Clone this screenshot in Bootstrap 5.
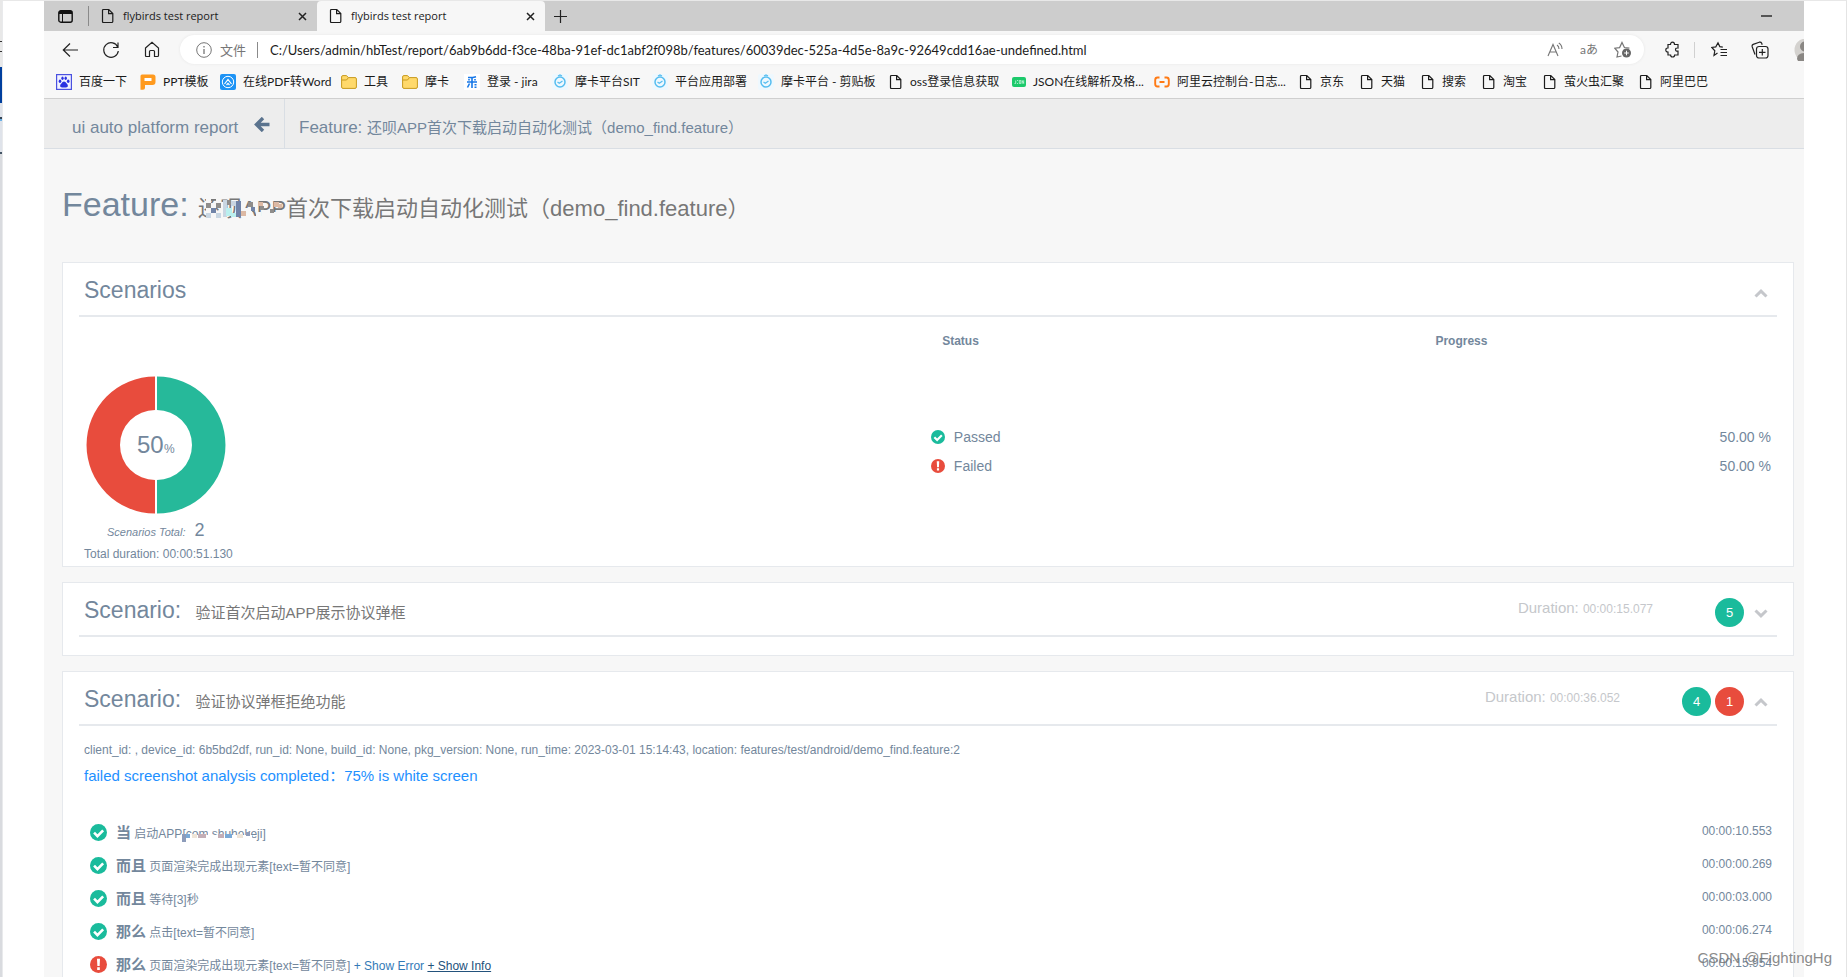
<!DOCTYPE html>
<html lang="zh-CN">
<head>
<meta charset="utf-8">
<meta name="viewport" content="width=device-width, initial-scale=1">
<title>flybirds test report</title>
<link href="https://cdn.jsdelivr.net/npm/bootstrap@5.3.0/dist/css/bootstrap.min.css" rel="stylesheet">
<style>
  :root { --ink:#73879c; --rule:#e6e9ed; --green:#1abb9c; --red:#e84c3d; --muted:#c5c7cb; }
  body { font-family:"Liberation Sans","Noto Sans CJK SC",sans-serif; font-size:12px; line-height:20px; color:var(--ink); background:#fff; }
  svg { flex:none; display:block; }
  button { border:0; background:none; padding:0; color:inherit; }
  .desk { height:100vh; overflow:hidden; border-top:1px solid #e8e8e8; border-right:1px solid #e4e4e4; }
  .edge { width:3px; flex:none; border-right:1px solid #e9eaec;
    background:linear-gradient(#e8e8e8 0 40px,#333 40px 41px,#e8e8e8 41px 50px,#333 50px 51px,#e8e8e8 51px 66px,#003f9e 66px 102px,#dfe3ea 102px 116px,#345 116px 118px,#6ab0e6 118px 120px,#dfe3ea 120px 151px,#456 151px 153px,#d9dbdf 153px); }
  .browser { margin-left:41px; margin-right:42px; background:#f7f7f7; min-width:0; overflow:hidden; }
  .chrome-ui { font-family:Lato,"Noto Sans CJK SC",sans-serif; color:#1b1b1b; }
  .tabstrip { height:30px; background:#cdcdcd; font-family:"Open Sans","Noto Sans CJK SC",sans-serif; font-size:11px; }
  .tab-menu { margin:0 15px 0 14px; }
  .tab-item { height:30px; width:228px; padding:0 10px 0 12px; }
  .tab-item.current { background:#f7f7f7; border-radius:4px 4px 0 0; }
  .vline { width:1px; height:16px; background:#8a8a8a; flex:none; }
  .vline.tall { height:20px; }
  .vline.pale { background:#d0d0d0; margin:0 16px 0 13px; }
  .toolbar { height:37px; padding-left:18px; }
  .address { height:29px; background:#fff; border-radius:15px; padding:0 12px 0 16px; margin:0 21px 0 20px; color:#767676; font-size:13px; box-shadow:0 0 3px #e6e6e6; }
  .address label { margin:0 11px 0 8px; }
  .address input { border:0; outline:0; background:none; color:#1b1b1b; padding:0; min-width:0; }
  .address button { font-size:12px; }
  .marks { height:31px; display:grid; grid-template-columns:84fr 80fr 121fr 61fr 62fr 88fr 100fr 106fr 131fr 123fr 142fr 145fr 61fr 61fr 61fr 61fr 96fr 83fr; padding:0 82px 3px 12px; border-bottom:1px solid #cfcfcf; }
  .marks a { color:#1b1b1b; font-size:12px; white-space:nowrap; gap:7px; }
  .avatar-box { width:11px; overflow:hidden; }
  .report-nav { height:50px; background:#ededed; border-bottom:1px solid #d9dee4; font-size:17px; line-height:48px; }
  .report-nav a { color:var(--ink); padding:5px 0 0 14px; height:49px; }
  .report-nav .brand { width:241px; padding-left:28px; border-right:1px solid #d9dee4; }
  .brand svg { margin:13px 0 0 16px; }
  .fs15 { font-size:15px; }
  .page-head { font-size:34px; line-height:48px; padding:31px 0 34px 18px; margin:0; font-weight:400; }
  .page-head small { font-size:22px; line-height:1; color:#777; }
  .panel-list { padding:0 10px 0 18px; }
  .panel { background:#fff; border:1px solid var(--rule); padding:0 16px 2px; margin-bottom:15px; }
  .panel.folded { padding-bottom:18px; }
  .panel-top { height:54px; border-bottom:2px solid var(--rule); padding:6px 9px 0 5px; }
  .panel-top h2 { font-size:23px; line-height:28px; margin:0; font-weight:400; padding-bottom:4px; }
  .panel-top h2 small { font-size:15px; line-height:1; color:#777; margin-left:8px; }
  .took { color:var(--muted); font-size:15px; margin-right:62px; padding-bottom:7px; }
  .took small { font-size:12px; }
  .count { width:29px; height:29px; line-height:29px; border-radius:50%; color:#fff; text-align:center; font-size:13px; margin-right:4px; }
  .bg-ok { background:var(--green); } .bg-bad { background:var(--red); }
  .fold { margin-left:6px; color:var(--muted); }
  .fold svg { margin-top:2px; }
  .summary { width:41%; padding-left:5px; }
  .summary svg { margin:59px 0 4px 2px; }
  .total { line-height:24px; padding-left:23px; font-size:18px; }
  .total em { font-size:11px; margin-right:4px; }
  .stats { width:59%; margin-top:14px; font-size:14px; align-self:flex-start; }
  .stats th { font-size:12px; line-height:20px; text-align:center; padding:0; }
  .stats td { height:29px; padding:0; }
  .stats tr:first-child td { padding-top:71px; height:100px; }
  .stats td:last-child { text-align:right; padding-right:6px; }
  .state { margin-left:42%; gap:9px; }
  .meta { padding:14px 5px 0; }
  .verdict { color:#1e90ff; font-size:15px; line-height:24px; padding:4px 5px 28px; }
  .steps { padding:0 5px 0 11px; }
  .steps li { height:33px; }
  .steps .words { line-height:34px; margin-left:9px; }
  .steps b { font-size:15px; }
  .steps time { line-height:30px; }
  .steps a { color:#337ab7; }
  .steps a.hot { color:#23527c; text-decoration:underline; }
  .masked { position:relative; display:inline-block; }
  .masked svg { position:absolute; left:0; top:0; }
  .stamp { position:absolute; right:14px; bottom:9px; font-size:15px; line-height:20px; color:#777; opacity:.85; }
</style>
</head>
<body>
<svg width="0" height="0" class="position-absolute" aria-hidden="true">
  <defs>
    <symbol id="doc" viewBox="0 0 14 16"><path d="M2.5 1.5h5.3l4 4v8q0 1-1 1H2.500q-1 0-1-1v-11q0-1 1-1zM7.600 1.500v4.200h4.200" fill="none" stroke="currentColor" stroke-width="1.200"/></symbol>
    <symbol id="close" viewBox="0 0 9 9"><path d="M1 1l7 7M8 1L1 8" stroke="#222" stroke-width="1.500"/></symbol>
    <symbol id="folder" viewBox="0 0 16 16"><path d="M.6 3q0-1.400 1.300-1.400h3.600l1.800 2H14q1.400 0 1.400 1.300V13q0 1.400-1.400 1.400H2Q.6 14.400.6 13z" fill="#ffd96b" stroke="#c79a1e"/><path d="M.8 6h4.700l1.800-2.200" fill="none" stroke="#c79a1e"/></symbol>
    <symbol id="moka" viewBox="0 0 16 16"><rect width="16" height="16" rx="2" fill="#eef8fe"/><circle cx="8" cy="8" r="5" fill="none" stroke="#55bdf0" stroke-width="1.500"/><path d="M5.500 8l1.800 1.300L10.500 7M6 2l2-1 2 1" fill="none" stroke="#55bdf0" stroke-width="1.200"/></symbol>
    <symbol id="ok" viewBox="0 0 18 18"><circle cx="9" cy="9" r="9" fill="#1abb9c"/><path d="M4.300 9.200l3.600 3.600 6-6" fill="none" stroke="#fff" stroke-width="2.800"/></symbol>
    <symbol id="bad" viewBox="0 0 18 18"><circle cx="9" cy="9" r="9" fill="#e84c3d"/><path d="M7.400 3h3.200l-.4 7.500H7.800zM7.600 12h2.800v2.700H7.600z" fill="#fff"/></symbol>
    <symbol id="up" viewBox="0 0 14 9"><path d="M1.500 7.500L7 2.200l5.500 5.300" fill="none" stroke="currentColor" stroke-width="3"/></symbol>
    <symbol id="down" viewBox="0 0 14 9"><path d="M1.500 1.500L7 6.800l5.500-5.300" fill="none" stroke="currentColor" stroke-width="3"/></symbol>
  </defs>
</svg>
<div class="desk d-flex position-relative">
  <div class="edge"></div>
  <div class="browser flex-grow-1">
    <header class="chrome-ui">
      <div class="tabstrip d-flex align-items-center">
        <button class="tab-menu" aria-label="Tab actions"><svg width="15" height="13" viewBox="0 0 15 13"><rect x=".8" y=".8" width="13.400" height="11.400" rx="2" fill="none" stroke="#111" stroke-width="1.400"/><path d="M1 1h13v3H1z" fill="#111"/><path d="M4.500 4v8" stroke="#111"/></svg></button>
        <span class="vline tall"></span>
        <div class="tab-item d-flex align-items-center"><svg width="14" height="16"><use href="#doc"/></svg><span class="ms-2 flex-grow-1">flybirds test report</span><button aria-label="Close tab"><svg width="9" height="9"><use href="#close"/></svg></button></div>
        <div class="tab-item current d-flex align-items-center"><svg width="14" height="16"><use href="#doc"/></svg><span class="ms-2 flex-grow-1">flybirds test report</span><button aria-label="Close tab"><svg width="9" height="9"><use href="#close"/></svg></button></div>
        <button class="ms-2" aria-label="New tab"><svg width="15" height="15" viewBox="0 0 15 15"><path d="M7.500 1v13M1 7.500h13" stroke="#222" stroke-width="1.200"/></svg></button>
        <button aria-label="Minimize" class="ms-auto me-4 pe-2"><svg width="11" height="2"><path d="M0 1h11" stroke="#222" stroke-width="1.400"/></svg></button>
      </div>
      <div class="toolbar d-flex align-items-center">
        <button aria-label="Back"><svg width="16" height="16" viewBox="0 0 16 16"><path d="M16 8H1.500M8 1.500L1.300 8 8 14.500" fill="none" stroke="#222" stroke-width="1.200"/></svg></button>
        <button aria-label="Refresh" class="ms-4"><svg width="18" height="18" viewBox="0 0 18 18"><path d="M15.800 6.200A7.300 7.300 0 1 0 16.300 10M16 1.500v5h-5" fill="none" stroke="#222" stroke-width="1.200"/></svg></button>
        <button aria-label="Home" class="ms-4"><svg width="16" height="17" viewBox="0 0 16 17"><path d="M1.500 7L8 1.200 14.500 7v7.500q0 1-1 1h-3v-5q0-1-1-1h-3q-1 0-1 1v5h-3q-1 0-1-1z" fill="none" stroke="#222" stroke-width="1.200"/></svg></button>
        <div class="address d-flex align-items-center flex-grow-1">
          <svg width="16" height="16" viewBox="0 0 16 16"><circle cx="8" cy="8" r="7.300" fill="none" stroke="#767676"/><path d="M8 7v5M8 4v1.500" stroke="#767676" stroke-width="1.300"/></svg>
          <label for="url" class="text-nowrap">文件</label><span class="vline me-2"></span>
          <input id="url" class="flex-grow-1 ms-1" value="C:/Users/admin/hbTest/report/6ab9b6dd-f3ce-48ba-91ef-dc1abf2f098b/features/60039dec-525a-4d5e-8a9c-92649cdd16ae-undefined.html">
          <button aria-label="Read aloud"><svg width="17" height="16" viewBox="0 0 17 16"><path d="M1 14L6 2.500 11 14M2.600 10h6.800M10 3q2 1.200 2 4M11.800 1q3.200 2 3.200 6" fill="none" stroke="#767676" stroke-width="1.100"/></svg></button>
          <button aria-label="Translate" class="ms-3 text-nowrap">aあ</button>
          <button aria-label="Add favorite" class="ms-3"><svg width="18" height="17" viewBox="0 0 18 17"><path d="M7.500 15L3 16l1-5L.8 7.200l4.800-.6L8 1.500l2.400 5 5 .7" fill="none" stroke="#767676" stroke-width="1.200"/><circle cx="12.500" cy="12" r="4.500" fill="#666"/><path d="M12.500 9.700v4.600M10.200 12h4.600" stroke="#fff"/></svg></button>
        </div>
        <button aria-label="Extensions"><svg width="16" height="17" viewBox="0 0 16 17"><path d="M3 3.500h2.500q0-2.300 2-2.300t2 2.300H13V7q-2.500-.2-2.500 1.600T13 10.200V14H9.600q0 2-2 2t-2-2H3v-3q-2.200 0-2.200-2T3 7z" fill="none" stroke="#222" stroke-width="1.200"/></svg></button>
        <span class="vline pale"></span>
        <button aria-label="Favorites"><svg width="16" height="17" viewBox="0 0 16 17"><path d="M6.500 12L3 14.500l.8-4.700L.8 6.500l4-.6L7 1.800l1.800 3.800 3 .5M9.500 8.500H16M9.500 11.500H16M9.500 14.500H16" fill="none" stroke="#222" stroke-width="1.200"/></svg></button>
        <button aria-label="Collections" class="ms-4"><svg width="18" height="18" viewBox="0 0 18 18"><rect x="5.500" y="5.500" width="11.500" height="11.500" rx="2.500" fill="none" stroke="#222" stroke-width="1.200"/><path d="M11.300 8v6.500M8 11.300h6.500M4 13.500L1.200 5.700q-.5-1.700 1-2.300l6-2.200q1.800-.5 2.500 1l.5 1.500" fill="none" stroke="#222" stroke-width="1.200"/></svg></button>
        <div class="avatar-box ms-4"><svg width="26" height="22" viewBox="0 0 26 22"><circle cx="13" cy="11" r="11.500" fill="#d4d2cf"/><circle cx="12" cy="7.500" r="5" fill="#8a8784"/><path d="M4 20q0-6 8-6t8 6v2H5z" fill="#8a8784"/></svg></div>
      </div>
      <nav class="marks" aria-label="Bookmarks">
        <a href="#" class="d-flex align-items-center text-decoration-none"><svg width="16" height="16" viewBox="0 0 16 16"><rect x=".6" y=".6" width="14.800" height="14.800" fill="#f2f3ff" stroke="#4a51e0" stroke-width="1.200"/><g fill="#2932e1"><ellipse cx="4" cy="7.300" rx="1.300" ry="1.800"/><ellipse cx="6.500" cy="4.300" rx="1.200" ry="1.800"/><ellipse cx="9.700" cy="4.300" rx="1.200" ry="1.800"/><ellipse cx="12.200" cy="7.300" rx="1.300" ry="1.800"/><path d="M8 7.500q1.500 0 2.500 1.800l1.200 1.500q.8 2.700-2 2.700H6.300q-2.800 0-2-2.700L5.600 9.300Q6.500 7.500 8 7.500z"/></g></svg>百度一下</a>
        <a href="#" class="d-flex align-items-center text-decoration-none"><svg width="16" height="16" viewBox="0 0 16 16"><path d="M2 .5h11q2.500 0 2.500 2.500v5q0 3-3 3H5v3q0 1.800-2 1.800H.5V2Q.5.500 2 .5z" fill="#ff9a1e"/><path d="M4.500 4h7v3h-7z" fill="#fff"/></svg>PPT模板</a>
        <a href="#" class="d-flex align-items-center text-decoration-none"><svg width="16" height="16" viewBox="0 0 16 16"><rect width="16" height="16" rx="2" fill="#1d93f5"/><circle cx="8" cy="8" r="5.700" fill="none" stroke="#fff"/><path d="M4.500 10L8 5.500l3.500 4.500M6.500 11L8 9.300 9.500 11" fill="none" stroke="#fff" stroke-width="1.200"/></svg>在线PDF转Word</a>
        <a href="#" class="d-flex align-items-center text-decoration-none"><svg width="16" height="16"><use href="#folder"/></svg>工具</a>
        <a href="#" class="d-flex align-items-center text-decoration-none"><svg width="16" height="16"><use href="#folder"/></svg>摩卡</a>
        <a href="#" class="d-flex align-items-center text-decoration-none"><svg width="16" height="16" viewBox="0 0 16 16"><rect width="16" height="16" fill="#fff"/><path d="M4 3.500q4 .3 8-.8M3 8h10M8 3.500V14M5 5v1.500M11 5v1.500M5.500 9.500l-2 4" stroke="#1677e8" stroke-width="1.600" fill="none"/><path d="M10.500 10h2v1.500h-2zM10.500 12.500h2V14h-2z" fill="#1677e8"/></svg>登录 - jira</a>
        <a href="#" class="d-flex align-items-center text-decoration-none"><svg width="16" height="16"><use href="#moka"/></svg>摩卡平台SIT</a>
        <a href="#" class="d-flex align-items-center text-decoration-none"><svg width="16" height="16"><use href="#moka"/></svg>平台应用部署</a>
        <a href="#" class="d-flex align-items-center text-decoration-none"><svg width="16" height="16"><use href="#moka"/></svg>摩卡平台 - 剪贴板</a>
        <a href="#" class="d-flex align-items-center text-decoration-none"><svg width="14" height="16"><use href="#doc"/></svg>oss登录信息获取</a>
        <a href="#" class="d-flex align-items-center text-decoration-none"><svg width="14" height="12" viewBox="0 0 14 12"><rect y="1" width="14" height="10" rx="2" fill="#1cc96b"/><path d="M2.500 7.500h1.200V4.500M5 7.500h1M5 4.500h1.200M7.300 4.500h1.500v3H7.300zM10.200 7.800V4.500l1.500 3V4.300" stroke="#c9f5dc" stroke-width=".8" fill="none"/></svg>JSON在线解析及格...</a>
        <a href="#" class="d-flex align-items-center text-decoration-none"><svg width="16" height="12" viewBox="0 0 16 12"><path d="M5.500 1.500h-2Q1.200 1.500 1.200 4v4q0 2.500 2.300 2.500h2M10.500 1.500h2q2.300 0 2.300 2.500v4q0 2.500-2.300 2.500h-2M5.500 6h5" fill="none" stroke="#ff7a14" stroke-width="1.900"/></svg>阿里云控制台-日志...</a>
        <a href="#" class="d-flex align-items-center text-decoration-none"><svg width="14" height="16"><use href="#doc"/></svg>京东</a>
        <a href="#" class="d-flex align-items-center text-decoration-none"><svg width="14" height="16"><use href="#doc"/></svg>天猫</a>
        <a href="#" class="d-flex align-items-center text-decoration-none"><svg width="14" height="16"><use href="#doc"/></svg>搜索</a>
        <a href="#" class="d-flex align-items-center text-decoration-none"><svg width="14" height="16"><use href="#doc"/></svg>淘宝</a>
        <a href="#" class="d-flex align-items-center text-decoration-none"><svg width="14" height="16"><use href="#doc"/></svg>萤火虫汇聚</a>
        <a href="#" class="d-flex align-items-center text-decoration-none"><svg width="14" height="16"><use href="#doc"/></svg>阿里巴巴</a>
      </nav>
    </header>

    <nav class="report-nav d-flex text-nowrap">
      <a href="#" class="brand d-flex text-decoration-none">ui auto platform report
        <svg width="16" height="15" viewBox="0 0 16 15"><path d="M9 1L2.500 7.500 9 14M3 7.500h12.500" fill="none" stroke="#5a738e" stroke-width="3.400"/></svg></a>
      <a href="#" class="text-decoration-none">Feature: <span class="fs15">还呗APP首次下载启动自动化测试（demo_find.feature）</span></a>
    </nav>

    <main>
      <h1 class="page-head">Feature: <small><span class="masked">还呗APP<svg width="90" height="24" viewBox="0 0 90 24" shape-rendering="crispEdges"><path fill="#f7f7f7" d="M8 0h5v5H8zM18 0h5v5h-5zM13 5h5v5h-5zM8 10h5v5H8zM23 4h4v20h-4zM13 15h5v5h-5zM8 20h14v4H8zM44 10h10v4H44zM58 14h5v8h-5zM64 12h4v5h-4zM74 14h4v8h-4zM80 12h8v5h-8zM68 18h6v6h-6zM46 18h10v6H46z"/><path fill="#8f8d8b" d="M8 5h5v5H8zM18 5h5v5h-5zM50 4h5v5h-5zM62 8h4v4h-4zM72 11h4v4h-4zM28 2h5v5h-5z"/><path fill="#7184a8" d="M13 10h5v5h-5zM38 3h5v16h-5zM53 9h4v4h-4z"/><path fill="#c9d6e2" d="M8 15h5v5H8zM18 15h5v5h-5zM25 2h4v17h-4zM33 3h5v5h-5z"/><path fill="#baf0ef" d="M28 10h6v8h-6zM33 15h5v4h-5z"/><path fill="#dcb9a4" d="M43 13h5v5h-5zM76 4h5v5h-5zM60 4h5v4h-5zM80 6h4v4h-4z"/></svg></span>首次下载启动自动化测试（demo_find.feature）</small></h1>

      <div class="panel-list">
        <section class="panel">
          <div class="panel-top d-flex align-items-center justify-content-between"><h2>Scenarios</h2><button class="fold" aria-label="Collapse"><svg width="14" height="9"><use href="#up"/></svg></button></div>
          <div class="d-flex">
            <div class="summary">
              <svg width="140" height="138" viewBox="0 0 140 138"><path d="M69 0.500A68.500 68.500 0 0 0 69 137.500V104A35 35 0 0 1 69 34z" fill="#e84c3d"/><path d="M71 .5A68.500 68.500 0 0 1 71 137.500V104A35 35 0 0 0 71 34z" fill="#26b99a"/><text x="51" y="77" font-size="24" fill="#73879c">50</text><text x="78" y="77" font-size="12" fill="#73879c">%</text></svg>
              <div class="total"><em>Scenarios Total:</em> 2</div>
              <div>Total duration: 00:00:51.130</div>
            </div>
            <table class="stats">
              <colgroup><col style="width:37%"><col style="width:63%"></colgroup>
              <thead><tr><th scope="col">Status</th><th scope="col">Progress</th></tr></thead>
              <tbody>
                <tr><td><div class="state d-flex align-items-center"><svg width="14" height="14"><use href="#ok"/></svg>Passed</div></td><td>50.00 %</td></tr>
                <tr><td><div class="state d-flex align-items-center"><svg width="14" height="14"><use href="#bad"/></svg>Failed</div></td><td>50.00 %</td></tr>
              </tbody>
            </table>
          </div>
        </section>

        <section class="panel folded">
          <div class="panel-top d-flex align-items-center"><h2 class="flex-grow-1">Scenario: <small>验证首次启动APP展示协议弹框</small></h2><span class="took">Duration: <small>00:00:15.077</small></span><span class="count bg-ok">5</span><button class="fold" aria-label="Expand"><svg width="14" height="9"><use href="#down"/></svg></button></div>
        </section>

        <section class="panel">
          <div class="panel-top d-flex align-items-center"><h2 class="flex-grow-1">Scenario: <small>验证协议弹框拒绝功能</small></h2><span class="took">Duration: <small>00:00:36.052</small></span><span class="count bg-ok">4</span><span class="count bg-bad">1</span><button class="fold" aria-label="Collapse"><svg width="14" height="9"><use href="#up"/></svg></button></div>
          <div class="meta">client_id: , device_id: 6b5bd2df, run_id: None, build_id: None, pkg_version: None, run_time: 2023-03-01 15:14:43, location: features/test/android/demo_find.feature:2</div>
          <div class="verdict">failed screenshot analysis completed：75% is white screen</div>
          <ul class="steps list-unstyled mb-0">
            <li class="d-flex"><svg width="17" height="17" class="mt-2"><use href="#ok"/></svg><span class="words flex-grow-1"><b>当</b> 启动APP<span class="masked">[com.shuhekeji]<svg width="84" height="33" viewBox="0 3 84 33" shape-rendering="crispEdges"><path fill="#fff" d="M4 21h66v7H4zM26 14h4v12h-4z"/><path fill="#8d9cba" d="M0 20h4v8H0zM64 18h4v4h-4z"/><path fill="#7aa9d6" d="M4 20h4v4H4zM43 20h7v4h-7z"/><path fill="#c3aeb6" d="M16 20h8v4h-8zM36 20h6v4h-6z"/><path fill="#efe5d8" d="M10 20h5v4h-5zM55 20h6v4h-6z"/></svg></span></span><time>00:00:10.553</time></li>
            <li class="d-flex"><svg width="17" height="17" class="mt-2"><use href="#ok"/></svg><span class="words flex-grow-1"><b>而且</b> 页面渲染完成出现元素[text=暂不同意]</span><time>00:00:00.269</time></li>
            <li class="d-flex"><svg width="17" height="17" class="mt-2"><use href="#ok"/></svg><span class="words flex-grow-1"><b>而且</b> 等待[3]秒</span><time>00:00:03.000</time></li>
            <li class="d-flex"><svg width="17" height="17" class="mt-2"><use href="#ok"/></svg><span class="words flex-grow-1"><b>那么</b> 点击[text=暂不同意]</span><time>00:00:06.274</time></li>
            <li class="d-flex"><svg width="17" height="17" class="mt-2"><use href="#bad"/></svg><span class="words flex-grow-1"><b>那么</b> 页面渲染完成出现元素[text=暂不同意] <a href="#" class="text-decoration-none">+ Show Error</a> <a href="#" class="hot">+ Show Info</a></span><time>00:00:15.954</time></li>
          </ul>
        </section>
      </div>
    </main>
  </div>
  <div class="stamp">CSDN @FightingHg</div>
</div>
<script src="https://cdn.jsdelivr.net/npm/bootstrap@5.3.0/dist/js/bootstrap.bundle.min.js"></script>
</body>
</html>
